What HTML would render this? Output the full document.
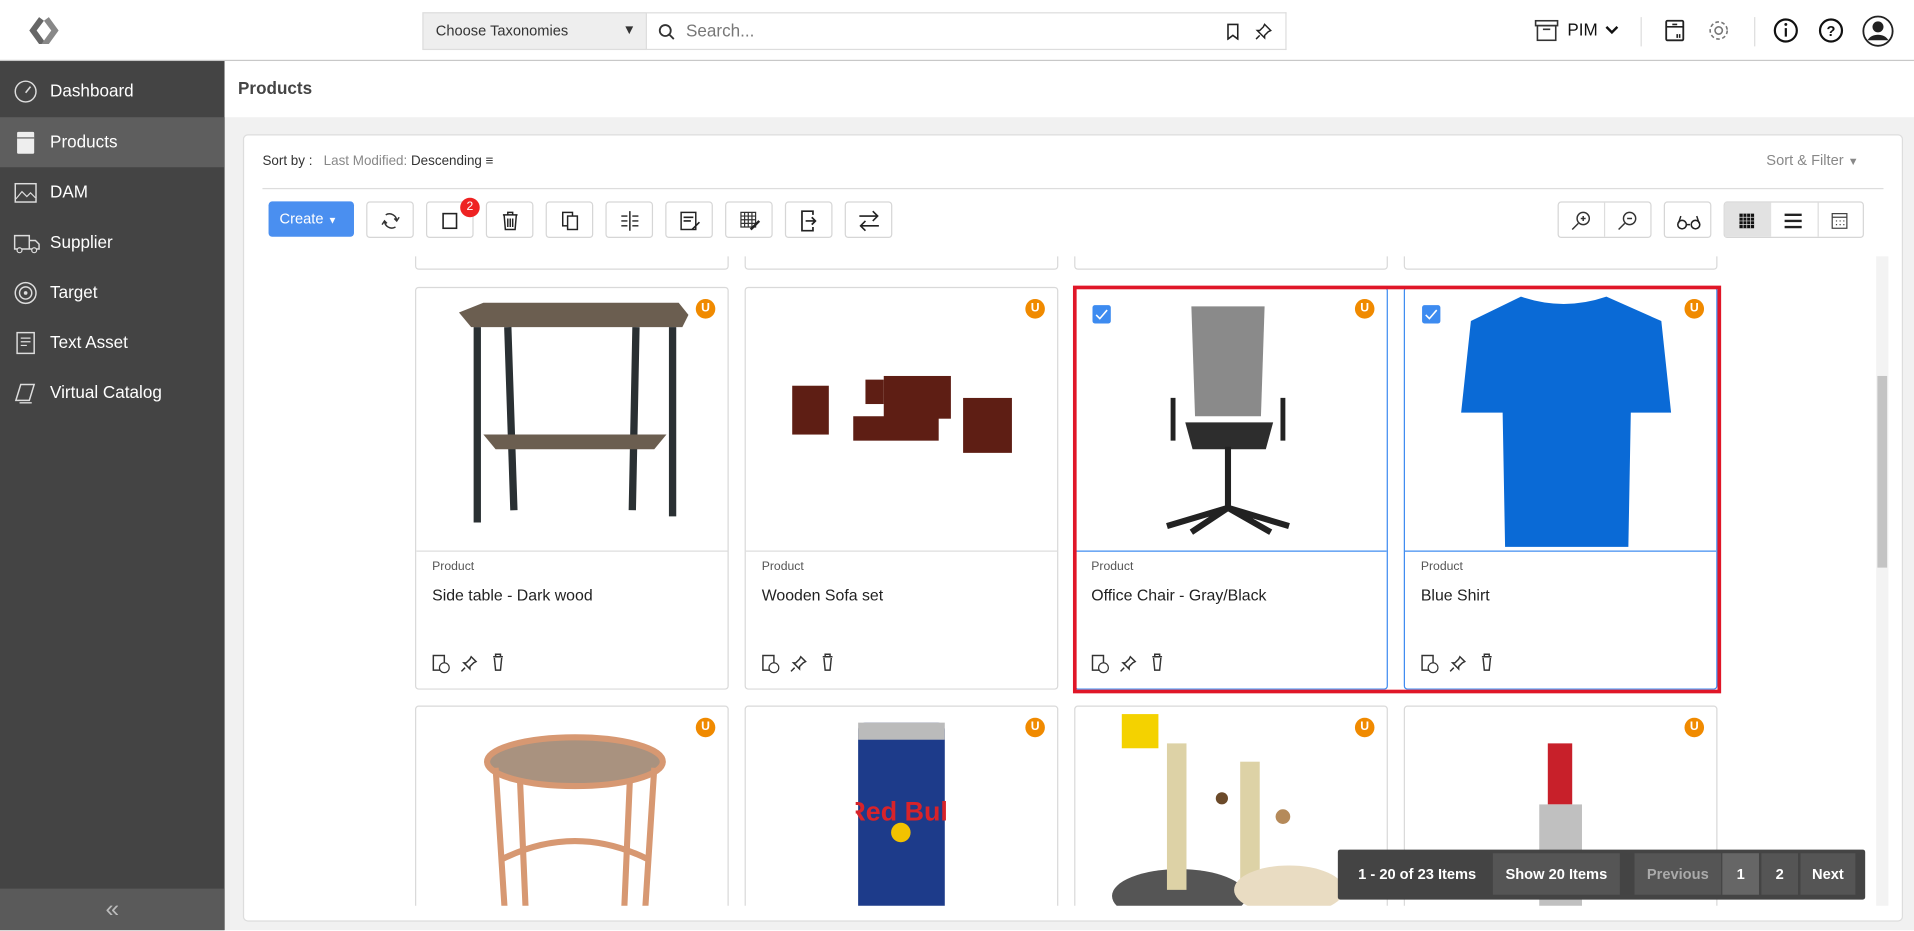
<!DOCTYPE html>
<html><head><meta charset="utf-8"><style>
*{box-sizing:border-box;margin:0;padding:0}
html,body{width:1914px;height:931px;overflow:hidden;background:#fff}
#w{position:absolute;left:0;top:0;width:1568px;height:762px;overflow:hidden;transform:scale(1.220663);transform-origin:0 0;font-family:"Liberation Sans",sans-serif;color:#333;background:#f1f1f1}
.a{position:absolute}
.hdr{left:0;top:0;width:1568px;height:50px;background:#fff;border-bottom:1px solid #c8c8c8}
.side{left:0;top:50px;width:184px;height:713px;background:#444}
.si{position:absolute;left:0;width:184px;height:41px;color:#fff;font-size:14px;line-height:41px;padding-left:41px}
.si svg{position:absolute;left:11px;top:11px}
.btn{position:absolute;top:165px;height:30px;width:39px;border:1px solid #d6d6d6;border-radius:3px;background:#fff}
.btn svg{position:absolute;left:9px;top:6px}
.card{position:absolute;width:257px;height:330px;background:#fff;border:1px solid #d9d9d9;border-radius:3px;overflow:hidden}
.card .ln{position:absolute;left:0;right:0;top:215px;border-top:1px solid #ddd}
.card .t{position:absolute;left:13px;top:223px;font-size:10px;color:#555}
.card .n{position:absolute;left:13px;top:244px;font-size:13px;color:#222}
.card .ic{position:absolute;left:12px;top:299px}
.u{position:absolute;right:10px;top:9px;width:16px;height:16px;border-radius:50%;background:#f08a00;color:#fff;font-size:10px;font-weight:bold;text-align:center;line-height:16px}
.chk{position:absolute;left:14px;top:14px;width:15px;height:15px;background:#3d8bf0;border-radius:2px}
.sel{border-color:#3d8bf0}
.sel .ln{border-color:#3d8bf0}
.pg{font-size:12px;font-weight:bold;color:#fff;line-height:34px;position:absolute;top:3px;height:34px;text-align:center}
</style></head><body><div id="w">
<div class="a hdr">
 <svg class="a" style="left:20px;top:12px" width="32" height="26" viewBox="0 0 32 26"><path d="M12 2 L4 13 L12 24 L18 24 L10 13 L16 5 Z" fill="#666"/><path d="M20 2 L28 13 L20 24 L14 24 L22 13 L16 5 Z" fill="#888"/></svg>
 <div class="a" style="left:346px;top:10px;width:184px;height:31px;background:#eee;border:1px solid #ddd;font-size:12px;line-height:29px;padding-left:10px">Choose Taxonomies<span style="position:absolute;right:8px;font-size:11px">▼</span></div>
 <div class="a" style="left:530px;top:10px;width:524px;height:31px;border:1px solid #ddd;border-left:none;font-size:14px;line-height:29px;padding-left:32px;color:#777">Search...
  <svg class="a" style="left:9px;top:8px" width="14" height="14" viewBox="0 0 14 14"><circle cx="6" cy="6" r="4.5" fill="none" stroke="#333" stroke-width="1.5"/><path d="M9.5 9.5L13 13" stroke="#333" stroke-width="1.5"/></svg>
  <svg class="a" style="left:474px;top:8px" width="12" height="14" viewBox="0 0 12 14"><path d="M2 1h8v12l-4-3-4 3z" fill="none" stroke="#222" stroke-width="1.3"/></svg>
  <svg class="a" style="left:497px;top:7px" width="16" height="16" viewBox="0 0 16 16"><path d="M9 2l5 5-2 1-3 3 0 2-6-6 2 0 3-3z M5 11l-3 3" fill="none" stroke="#222" stroke-width="1.2"/></svg>
 </div>
 <svg class="a" style="left:1257px;top:15px" width="20" height="20" viewBox="0 0 20 20"><rect x="1" y="2" width="18" height="4" fill="none" stroke="#333" stroke-width="1.3"/><rect x="2.5" y="6" width="15" height="12" fill="none" stroke="#333" stroke-width="1.3"/><path d="M7 9h6" stroke="#333" stroke-width="1.3"/></svg>
 <div class="a" style="left:1284px;top:16px;font-size:14px;color:#111">PIM</div>
 <svg class="a" style="left:1315px;top:21px" width="11" height="8" viewBox="0 0 11 8"><path d="M1 1l4.5 4.5L10 1" fill="none" stroke="#111" stroke-width="2"/></svg>
 <div class="a" style="left:1344px;top:14px;width:1px;height:24px;background:#ddd"></div>
 <svg class="a" style="left:1362px;top:15px" width="20" height="20" viewBox="0 0 20 20"><rect x="3" y="2" width="14" height="16" rx="1" fill="none" stroke="#222" stroke-width="1.5"/><path d="M3 7h14M8 5h4M12 13v3M14 13v3" stroke="#222" stroke-width="1.3"/></svg>
 <svg class="a" style="left:1398px;top:15px" width="20" height="20" viewBox="0 0 20 20"><circle cx="10" cy="10" r="3" fill="none" stroke="#777" stroke-width="1.3"/><circle cx="10" cy="10" r="7" fill="none" stroke="#777" stroke-width="1.3" stroke-dasharray="3 2"/></svg>
 <div class="a" style="left:1437px;top:14px;width:1px;height:24px;background:#ddd"></div>
 <svg class="a" style="left:1452px;top:14px" width="22" height="22" viewBox="0 0 22 22"><circle cx="11" cy="11" r="9" fill="none" stroke="#111" stroke-width="1.8"/><path d="M11 9v7" stroke="#111" stroke-width="1.8"/><circle cx="11" cy="6" r="1.2" fill="#111"/></svg>
 <svg class="a" style="left:1489px;top:14px" width="22" height="22" viewBox="0 0 22 22"><circle cx="11" cy="11" r="9" fill="none" stroke="#111" stroke-width="1.8"/><text x="11" y="15.5" font-size="12" font-weight="bold" text-anchor="middle" font-family="Liberation Sans" fill="#111">?</text></svg>
 <svg class="a" style="left:1525px;top:12px" width="27" height="27" viewBox="0 0 27 27"><circle cx="13.5" cy="13.5" r="12" fill="none" stroke="#222" stroke-width="1.5"/><circle cx="13.5" cy="10" r="4.5" fill="#222"/><path d="M5 21c3-6 14-6 17 0" fill="#222"/></svg>
</div>
<div class="a side">
 <div class="si" style="top:4px"><svg width="20" height="20" viewBox="0 0 20 20"><circle cx="10" cy="10" r="8.5" fill="none" stroke="#ddd" stroke-width="1.2"/><path d="M10 11l4-5" stroke="#ddd" stroke-width="1.3"/></svg>Dashboard</div>
 <div class="si" style="top:46px;background:#5e5e5e"><svg width="20" height="20" viewBox="0 0 20 20"><rect x="3" y="1" width="14" height="18" rx="1" fill="#eee"/><path d="M3 6h14" stroke="#555"/></svg>Products</div>
 <div class="si" style="top:87px"><svg width="20" height="20" viewBox="0 0 20 20"><rect x="1.5" y="2.5" width="17" height="15" fill="none" stroke="#ddd" stroke-width="1.2"/><path d="M2 15l5-6 4 4 3-3 4 4" fill="none" stroke="#ddd"/></svg>DAM</div>
 <div class="si" style="top:128px"><svg width="22" height="20" viewBox="0 0 22 20"><path d="M1 4h12v11H1zM13 8h5l3 3v4h-8" fill="none" stroke="#ddd" stroke-width="1.2"/><circle cx="5" cy="16" r="2" fill="#444" stroke="#ddd"/><circle cx="17" cy="16" r="2" fill="#444" stroke="#ddd"/></svg>Supplier</div>
 <div class="si" style="top:169px"><svg width="20" height="20" viewBox="0 0 20 20"><circle cx="10" cy="10" r="8.5" fill="none" stroke="#ddd" stroke-width="1.2"/><circle cx="10" cy="10" r="5" fill="none" stroke="#ddd" stroke-width="1.2"/><circle cx="10" cy="10" r="1.5" fill="#ddd"/></svg>Target</div>
 <div class="si" style="top:210px"><svg width="20" height="20" viewBox="0 0 20 20"><rect x="3" y="1.5" width="14" height="17" fill="none" stroke="#ddd" stroke-width="1.2"/><path d="M6 6h8M6 9h8M6 12h5" stroke="#ddd"/></svg>Text Asset</div>
 <div class="si" style="top:251px"><svg width="20" height="20" viewBox="0 0 20 20"><path d="M2 16l4-13h11l-4 13z M5 18h10" fill="none" stroke="#ddd" stroke-width="1.2"/></svg>Virtual Catalog</div>
 <div class="a" style="left:0;top:678px;width:184px;height:35px;background:#5a5a5a;color:#bbb;font-size:20px;text-align:center;line-height:35px">«</div>
</div>
<div class="a" style="left:184px;top:50px;width:1384px;height:46px;background:#fff"></div>
<div class="a" style="left:195px;top:64px;font-size:14px;font-weight:bold;color:#444">Products</div>
<div class="a" style="left:199px;top:110px;width:1360px;height:645px;background:#fff;border:1px solid #ddd;border-radius:4px"></div>
<div class="a" style="left:215px;top:126px;font-size:11px;color:#333">Sort by :&nbsp;&nbsp; <span style="color:#888">Last Modified:</span> Descending ≡</div>
<div class="a" style="left:1447px;top:124px;font-size:12px;color:#888">Sort &amp; Filter <span style="font-size:9px">▼</span></div>
<div class="a" style="left:215px;top:154px;width:1328px;height:1px;background:#ddd"></div>
<div class="a" style="left:220px;top:165px;width:70px;height:29px;background:#4a8ff0;border-radius:3px;color:#fff;font-size:12px;line-height:29px;padding-left:9px">Create <span style="font-size:8px">▼</span></div>
<div class="btn" style="left:300px"><svg width="20" height="18" viewBox="0 0 20 18"><path d="M6 4a6 6 0 0 1 9 5M14 14a6 6 0 0 1-9-5M13 7l2 2 2-3M7 11l-2-2-2 3" fill="none" stroke="#333" stroke-width="1.2"/></svg></div>
<div class="btn" style="left:349px"><svg width="20" height="18" viewBox="0 0 20 18"><rect x="4" y="3" width="11" height="12" fill="none" stroke="#222" stroke-width="1.3"/></svg></div>
<div class="a" style="left:377px;top:162px;width:16px;height:16px;border-radius:50%;background:#ee2222;color:#fff;font-size:10px;text-align:center;line-height:16px">2</div>
<div class="btn" style="left:398px"><svg width="20" height="18" viewBox="0 0 20 18"><path d="M4 4h12M8 4V2h4v2M5 4l1 12h8l1-12M8 7v7M10 7v7M12 7v7" fill="none" stroke="#222" stroke-width="1.2"/></svg></div>
<div class="btn" style="left:447px"><svg width="20" height="18" viewBox="0 0 20 18"><rect x="4" y="2" width="8" height="11" fill="none" stroke="#222" stroke-width="1.2"/><rect x="8" y="5" width="8" height="11" fill="#fff" stroke="#222" stroke-width="1.2"/></svg></div>
<div class="btn" style="left:496px"><svg width="20" height="18" viewBox="0 0 20 18"><path d="M10 1v16M3 5h5M12 5h5M3 9h5M12 9h5M3 13h5M12 13h5" stroke="#222" stroke-width="1.2"/></svg></div>
<div class="btn" style="left:545px"><svg width="20" height="18" viewBox="0 0 20 18"><rect x="3" y="2" width="12" height="14" fill="none" stroke="#222" stroke-width="1.2"/><path d="M5 6h8M5 9h6M12 16l6-6" stroke="#222" stroke-width="1.3"/></svg></div>
<div class="btn" style="left:594px"><svg width="20" height="18" viewBox="0 0 20 18"><path d="M3 2h12v12H3zM3 5h12M3 8h12M3 11h12M6 2v12M9 2v12M12 2v12" fill="none" stroke="#333" stroke-width="1"/><path d="M11 16l7-7" stroke="#222" stroke-width="2"/></svg></div>
<div class="btn" style="left:643px"><svg width="20" height="18" viewBox="0 0 20 18"><path d="M13 4V1H4v16h9v-3" fill="none" stroke="#222" stroke-width="1.4"/><path d="M7 9h8M12 6l3 3-3 3" fill="none" stroke="#222" stroke-width="1.4"/></svg></div>
<div class="btn" style="left:692px"><svg width="20" height="18" viewBox="0 0 20 18"><path d="M2 5h15M13 1l4 4-4 4M18 13H3M7 9l-4 4 4 4" fill="none" stroke="#222" stroke-width="1.3"/></svg></div>
<div class="btn" style="left:1276px;width:77px"><svg width="18" height="18" viewBox="0 0 18 18"><circle cx="11" cy="7" r="5" fill="none" stroke="#333" stroke-width="1.2"/><path d="M7 11l-5 5M9 7h4M11 5v4" stroke="#333" stroke-width="1.2"/></svg><svg style="left:47px" width="18" height="18" viewBox="0 0 18 18"><circle cx="11" cy="7" r="5" fill="none" stroke="#333" stroke-width="1.2"/><path d="M7 11l-5 5M9 7h4" stroke="#333" stroke-width="1.2"/></svg><div class="a" style="left:37px;top:0;width:1px;height:28px;background:#ddd"></div></div>
<div class="btn" style="left:1363px"><svg width="22" height="18" viewBox="0 0 22 18"><circle cx="5" cy="12" r="3.5" fill="none" stroke="#222" stroke-width="1.3"/><circle cx="16" cy="12" r="3.5" fill="none" stroke="#222" stroke-width="1.3"/><path d="M8.5 12h3M2 11l2-6M19 11l-2-6" fill="none" stroke="#222" stroke-width="1.2"/></svg></div>
<div class="btn" style="left:1412px;width:115px;background:#fff"><div class="a" style="left:0;top:0;width:38px;height:28px;background:#e2e2e2"></div><svg width="18" height="18" viewBox="0 0 18 18"><path d="M3 3h12v12H3z" fill="#111"/><path d="M6 3v12M9 3v12M12 3v12M3 6h12M3 9h12M3 12h12" stroke="#ddd" stroke-width=".6"/></svg><svg style="left:47px" width="18" height="18" viewBox="0 0 18 18"><path d="M2 4h14M2 9h14M2 14h14" stroke="#222" stroke-width="2"/></svg><svg style="left:85px" width="18" height="18" viewBox="0 0 18 18"><rect x="3" y="3" width="12" height="12" fill="none" stroke="#444"/><path d="M3 6h12M6 9h1M9 9h1M12 9h1M6 12h1M9 12h1M12 12h1" stroke="#444"/></svg><div class="a" style="left:76px;top:0;width:1px;height:28px;background:#ddd"></div></div>
<div class="a" style="left:200px;top:210px;width:1348px;height:532px;overflow:hidden">
 <div class="card" style="left:140px;top:-120px;height:131px"></div>
 <div class="card" style="left:410px;top:-120px;height:131px"></div>
 <div class="card" style="left:680px;top:-120px;height:131px"></div>
 <div class="card" style="left:950px;top:-120px;height:131px"></div>
 <div class="card" style="left:140px;top:25px"><svg class="a" style="left:30px;top:10px" width="200" height="195" viewBox="0 0 200 195"><path d="M5 10l20-8h160l8 10-5 10H15z" fill="#6b5e50"/><path d="M20 22v160M180 22v155M45 22l5 150M150 22l-3 150" stroke="#2a3033" stroke-width="6" fill="none"/><path d="M25 110h150l-10 12H35z" fill="#6b5e50"/></svg><div class="u">U</div><div class="ln"></div><div class="t">Product</div><div class="n">Side table - Dark wood</div><svg class="ic" width="60" height="18" viewBox="0 0 60 18"><rect x="2" y="2" width="9" height="12" fill="none" stroke="#333" stroke-width="1.2"/><circle cx="11" cy="12" r="4" fill="#fff" stroke="#333"/><path d="M33 3l4 4-2 1-3 3v2l-5-5h2l3-3zM28 12l-3 3" fill="none" stroke="#333" stroke-width="1.2"/><path d="M51 3h8M53 3V1h4v2M52 4l1 10h4l1-10" fill="none" stroke="#333" stroke-width="1.2"/></svg></div>
 <div class="card" style="left:410px;top:25px"><svg class="a" style="left:28px;top:60px" width="200" height="90" viewBox="0 0 200 90"><g fill="#5e1e14"><rect x="10" y="20" width="30" height="40"/><rect x="85" y="12" width="55" height="35"/><rect x="60" y="45" width="70" height="20"/><rect x="150" y="30" width="40" height="45"/><rect x="70" y="15" width="15" height="20"/></g></svg><div class="u">U</div><div class="ln"></div><div class="t">Product</div><div class="n">Wooden Sofa set</div><svg class="ic" width="60" height="18" viewBox="0 0 60 18"><rect x="2" y="2" width="9" height="12" fill="none" stroke="#333" stroke-width="1.2"/><circle cx="11" cy="12" r="4" fill="#fff" stroke="#333"/><path d="M33 3l4 4-2 1-3 3v2l-5-5h2l3-3zM28 12l-3 3" fill="none" stroke="#333" stroke-width="1.2"/><path d="M51 3h8M53 3V1h4v2M52 4l1 10h4l1-10" fill="none" stroke="#333" stroke-width="1.2"/></svg></div>
 <div class="card sel" style="left:680px;top:25px"><svg class="a" style="left:60px;top:10px" width="130" height="200" viewBox="0 0 130 200"><path d="M35 5h60l-3 90H38z" fill="#8a8a8a"/><path d="M30 100h72l-6 22H36z" fill="#2d2d2d"/><path d="M20 80v35M110 80v35" stroke="#222" stroke-width="4"/><path d="M65 120v50M15 185l50-15 50 15M35 190l30-20 35 20" stroke="#222" stroke-width="5" fill="none"/></svg><div class="chk"><svg width="15" height="15" viewBox="0 0 15 15"><path d="M3 8l3 3 6-7" fill="none" stroke="#fff" stroke-width="1.3"/></svg></div><div class="u">U</div><div class="ln"></div><div class="t">Product</div><div class="n">Office Chair - Gray/Black</div><svg class="ic" width="60" height="18" viewBox="0 0 60 18"><rect x="2" y="2" width="9" height="12" fill="none" stroke="#333" stroke-width="1.2"/><circle cx="11" cy="12" r="4" fill="#fff" stroke="#333"/><path d="M33 3l4 4-2 1-3 3v2l-5-5h2l3-3zM28 12l-3 3" fill="none" stroke="#333" stroke-width="1.2"/><path d="M51 3h8M53 3V1h4v2M52 4l1 10h4l1-10" fill="none" stroke="#333" stroke-width="1.2"/></svg></div>
 <div class="card sel" style="left:950px;top:25px"><svg class="a" style="left:40px;top:5px" width="180" height="210" viewBox="0 0 180 210"><path d="M55 2q35 12 70 0l45 20 8 75h-33l-2 110H42l-2-110H6l8-75z" fill="#0a6ad6"/></svg><div class="chk"><svg width="15" height="15" viewBox="0 0 15 15"><path d="M3 8l3 3 6-7" fill="none" stroke="#fff" stroke-width="1.3"/></svg></div><div class="u">U</div><div class="ln"></div><div class="t">Product</div><div class="n">Blue Shirt</div><svg class="ic" width="60" height="18" viewBox="0 0 60 18"><rect x="2" y="2" width="9" height="12" fill="none" stroke="#333" stroke-width="1.2"/><circle cx="11" cy="12" r="4" fill="#fff" stroke="#333"/><path d="M33 3l4 4-2 1-3 3v2l-5-5h2l3-3zM28 12l-3 3" fill="none" stroke="#333" stroke-width="1.2"/><path d="M51 3h8M53 3V1h4v2M52 4l1 10h4l1-10" fill="none" stroke="#333" stroke-width="1.2"/></svg></div>
 <div class="card" style="left:140px;top:368px"><svg class="a" style="left:50px;top:15px" width="160" height="160" viewBox="0 0 160 160"><ellipse cx="80" cy="30" rx="72" ry="20" fill="#a9927f" stroke="#d79872" stroke-width="5"/><path d="M15 35l8 125M145 35l-8 125M35 45l5 115M125 45l-5 115M20 110q60-30 120 0" stroke="#d79872" stroke-width="5" fill="none"/></svg><div class="u">U</div></div>
 <div class="card" style="left:410px;top:368px"><svg class="a" style="left:90px;top:8px" width="75" height="160" viewBox="0 0 75 160"><rect x="2" y="5" width="71" height="160" rx="6" fill="#1d3b8a"/><rect x="2" y="5" width="71" height="14" fill="#bbb"/><text x="37" y="85" font-size="22" font-weight="bold" fill="#d8232a" text-anchor="middle" font-family="Liberation Sans">Red Bull</text><circle cx="37" cy="95" r="8" fill="#f2c200"/></svg><div class="u">U</div></div>
 <div class="card" style="left:680px;top:368px"><div class="a" style="left:38px;top:6px;width:30px;height:28px;background:#f4d200"></div><svg class="a" style="left:25px;top:20px" width="200" height="150" viewBox="0 0 200 150"><ellipse cx="60" cy="135" rx="55" ry="22" fill="#555"/><rect x="50" y="10" width="16" height="120" fill="#ddd2a6"/><rect x="110" y="25" width="16" height="110" fill="#ddd2a6"/><ellipse cx="150" cy="130" rx="45" ry="20" fill="#e9dcc2"/><circle cx="95" cy="55" r="5" fill="#6b4a2a"/><circle cx="145" cy="70" r="6" fill="#b58a5a"/></svg><div class="u">U</div></div>
 <div class="card" style="left:950px;top:368px"><svg class="a" style="left:105px;top:25px" width="45" height="140" viewBox="0 0 45 140"><path d="M12 5h20v50H12z" fill="#c8202a"/><rect x="5" y="55" width="35" height="90" fill="#c0c0c0"/></svg><div class="u">U</div></div>
</div>
<div class="a" style="left:879px;top:234px;width:531px;height:334px;border:3px solid #e01628"></div>
<div class="a" style="left:1537px;top:210px;width:10px;height:532px;background:#f3f3f3"><div class="a" style="left:1px;top:98px;width:8px;height:157px;background:#c4c4c4"></div></div>
<div class="a" style="left:1096px;top:696px;width:432px;height:41px;background:#444;border-radius:2px">
 <div class="pg" style="left:6px;width:118px">1 - 20 of 23 Items</div>
 <div class="pg" style="left:127px;width:104px;background:#555">Show 20 Items</div>
 <div class="pg" style="left:243px;width:71px;background:#555;color:#aaa">Previous</div>
 <div class="pg" style="left:315px;width:30px;background:#666">1</div>
 <div class="pg" style="left:347px;width:30px;background:#555">2</div>
 <div class="pg" style="left:379px;width:45px;background:#555">Next</div>
</div>
</div></body></html>
